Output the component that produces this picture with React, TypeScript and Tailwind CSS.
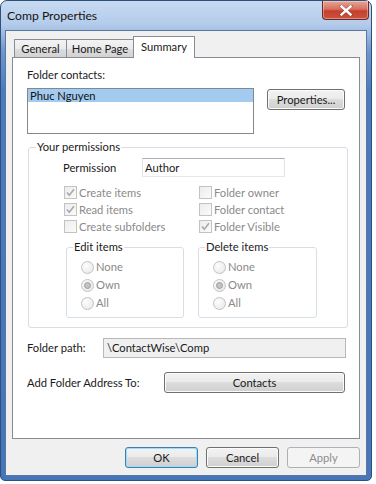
import React from "react";

const btn =
  "h-[21px] rounded-[3px] border flex items-center justify-center leading-none";
const btnNormal =
  "border-[#707070] bg-[linear-gradient(to_bottom,#f2f2f2_0%,#ebebeb_49%,#dddddd_50%,#cfcfcf_100%)] shadow-[inset_0_0_0_1px_#fbfbfb] text-[#1a1a1a]";

function Check({ checked, label, col }: { checked?: boolean; label: string; col?: boolean }) {
  return (
    <div className={`h-[17px] flex items-center ${col ? "w-[135px]" : ""}`}>
      <span className="w-[13px] h-[13px] border border-[#c3c3c3] bg-[linear-gradient(135deg,#ececec_0%,#fbfbfb_100%)] flex items-center justify-center shrink-0">
        {checked && (
          <svg width="11" height="11" viewBox="0 0 11 11">
            <path d="M2 5.5 L4.3 8.3 L9 2.2" fill="none" stroke="#a9a9a9" strokeWidth="1.6" />
          </svg>
        )}
      </span>
      <span className="ml-[2px] text-[#8a8a8a] leading-[17px]">{label}</span>
    </div>
  );
}

function Radio({ checked, label }: { checked?: boolean; label: string }) {
  return (
    <div className="h-[18px] flex items-center">
      <span className="w-[13px] h-[13px] rounded-full border border-[#c2c2c2] bg-[radial-gradient(circle_at_35%_35%,#fdfdfd_0%,#e6e6e6_100%)] flex items-center justify-center shrink-0">
        {checked && <span className="w-[7px] h-[7px] rounded-full border border-[#9c9c9c] bg-[#c4c4c4]" />}
      </span>
      <span className="ml-[2px] text-[#8a8a8a] leading-[18px]">{label}</span>
    </div>
  );
}

function SubGroup({ title, w }: { title: string; w: string }) {
  return (
    <div className={`${w} h-[71px] relative border border-[#d5dfe5] rounded-[3px]`}>
      <span className="absolute left-[6px] -top-[10px] px-[1px] bg-white leading-[17px] text-[#1a1a1a]">{title}</span>
      <div className="pt-[10px] pl-[14px] flex flex-col">
        <Radio label="None" />
        <Radio label="Own" checked />
        <Radio label="All" />
      </div>
    </div>
  );
}

export default function App() {
  return (
    <div className="w-[376px] h-[484px] bg-white font-['Lato',sans-serif] text-[11.2px] text-black">
      <div className="w-[372px] h-[481px] rounded-t-[7px] rounded-b-[5px] border border-[#2f4f7c] bg-[linear-gradient(to_bottom,#c7daf1_0px,#b3cbea_24px,#6f96cc_50px,#4b7bbd_90px,#4676b9_100%)] flex flex-col">
        {/* title bar */}
        <div className="h-[29px] flex items-start shrink-0">
          <span className="ml-[6px] mt-[6px] leading-[17px] text-[12.2px] text-[#141414]">Comp Properties</span>
          <div className="ml-auto mr-[2px] w-[47px] h-[19px] rounded-b-[4px] border border-t-0 border-[#6e2a22] bg-[linear-gradient(to_bottom,#e8a596_0%,#d8705f_45%,#c4402d_55%,#c9543f_100%)] shadow-[inset_0_0_0_1px_rgba(255,255,255,0.35)] flex items-center justify-center">
            <svg width="14" height="11" viewBox="0 0 14 11">
              <path d="M2 1 L12 10 M12 1 L2 10" stroke="#5a1a12" strokeWidth="3.6" strokeLinecap="round" opacity="0.35" />
              <path d="M2.5 1.5 L11.5 9.5 M11.5 1.5 L2.5 9.5" stroke="#ffffff" strokeWidth="2.4" strokeLinecap="square" />
            </svg>
          </div>
        </div>
        {/* client */}
        <div className="ml-[4px] mr-[4px] h-[446px] border border-[#58789f] bg-[#f0f0f0] flex flex-col">
          <div className="pt-[5px] px-[6px] flex flex-col">
            {/* tabs */}
            <div className="h-[21px] flex items-end pl-[2px]">
              <div className="w-[53px] h-[18px] border border-b-0 border-[#898c95] bg-[linear-gradient(to_bottom,#f3f3f3_0%,#ebebeb_50%,#dedede_51%,#d2d2d2_100%)] flex items-center justify-center text-[#1a1a1a] leading-none">
                General
              </div>
              <div className="w-[68px] h-[18px] -ml-[1px] border border-b-0 border-[#898c95] bg-[linear-gradient(to_bottom,#f3f3f3_0%,#ebebeb_50%,#dedede_51%,#d2d2d2_100%)] flex items-center justify-center text-[#1a1a1a] leading-none">
                Home Page
              </div>
              <div className="w-[62px] h-[22px] -mb-[1px] -ml-[1px] relative z-10 border border-b-0 border-[#898c95] bg-white flex items-start justify-center pt-[3px] text-[#1a1a1a] leading-[14px]">
                Summary
              </div>
            </div>
            {/* panel */}
            <div className="w-[348px] h-[382px] border border-[#898c95] bg-white pl-[14px] pt-[9px] flex flex-col">
              <div className="leading-[16px] h-[16px] text-[#1a1a1a]">Folder contacts:</div>
              <div className="mt-[5px] flex items-start">
                <div className="w-[227px] h-[46px] border border-[#828790] bg-white">
                  <div className="h-[13px] bg-[#a3cbf0] pl-[2px] leading-[13px] text-[#111]">Phuc Nguyen</div>
                </div>
                <div className={`${btn} ${btnNormal} ml-[13px] mt-[1px] w-[78px]`}>Properties...</div>
              </div>
              {/* your permissions */}
              <div className="mt-[13px] ml-[1px] w-[320px] h-[181px] relative border border-[#d5dfe5] rounded-[3px] flex flex-col">
                <span className="absolute left-[7px] -top-[10px] px-[1px] bg-white leading-[17px] text-[#1a1a1a]">Your permissions</span>
                <div className="mt-[10px] pl-[34px] flex items-center">
                  <span className="w-[79px] leading-[19px] text-[#1a1a1a]">Permission</span>
                  <div className="w-[143px] h-[19px] border border-[#abadb3] border-b-[#e3e9ef] border-x-[#e2e3ea] bg-white pl-[2px] leading-[17px] text-[#1a1a1a]">
                    Author
                  </div>
                </div>
                <div className="mt-[7px] pl-[35px] flex flex-col">
                  <div className="flex">
                    <Check col checked label="Create items" />
                    <Check label="Folder owner" />
                  </div>
                  <div className="flex">
                    <Check col checked label="Read items" />
                    <Check label="Folder contact" />
                  </div>
                  <div className="flex">
                    <Check col label="Create subfolders" />
                    <Check checked label="Folder Visible" />
                  </div>
                </div>
                <div className="mt-[12px] pl-[37px] flex gap-[14px]">
                  <SubGroup title="Edit items" w="w-[118px]" />
                  <SubGroup title="Delete items" w="w-[119px]" />
                </div>
              </div>
              {/* folder path */}
              <div className="mt-[10px] flex items-center">
                <span className="w-[76px] leading-[20px] text-[#1a1a1a]">Folder path:</span>
                <div className="w-[243px] h-[20px] border border-[#b8b8b8] bg-[#f0f0f0] pl-[3px] leading-[18px] text-[#1a1a1a]">
                  \ContactWise\Comp
                </div>
              </div>
              <div className="mt-[14px] flex items-center">
                <span className="w-[137px] leading-[21px] text-[#1a1a1a]">Add Folder Address To:</span>
                <div className={`${btn} ${btnNormal} w-[181px]`}>Contacts</div>
              </div>
            </div>
            {/* bottom buttons */}
            <div className="mt-[8px] w-[348px] flex justify-end gap-[8px]">
              <div className={`${btn} w-[73px] border-[#3c7fb1] bg-[linear-gradient(to_bottom,#f2f2f2_0%,#ebebeb_49%,#dddddd_50%,#cfcfcf_100%)] shadow-[inset_0_0_0_1px_#9fdcf5] text-[#1a1a1a]`}>
                OK
              </div>
              <div className={`${btn} ${btnNormal} w-[73px]`}>Cancel</div>
              <div className={`${btn} w-[73px] border-[#adb2b5] bg-[#f4f4f4] text-[#8d8d8d]`}>Apply</div>
            </div>
          </div>
        </div>
      </div>
    </div>
  );
}
